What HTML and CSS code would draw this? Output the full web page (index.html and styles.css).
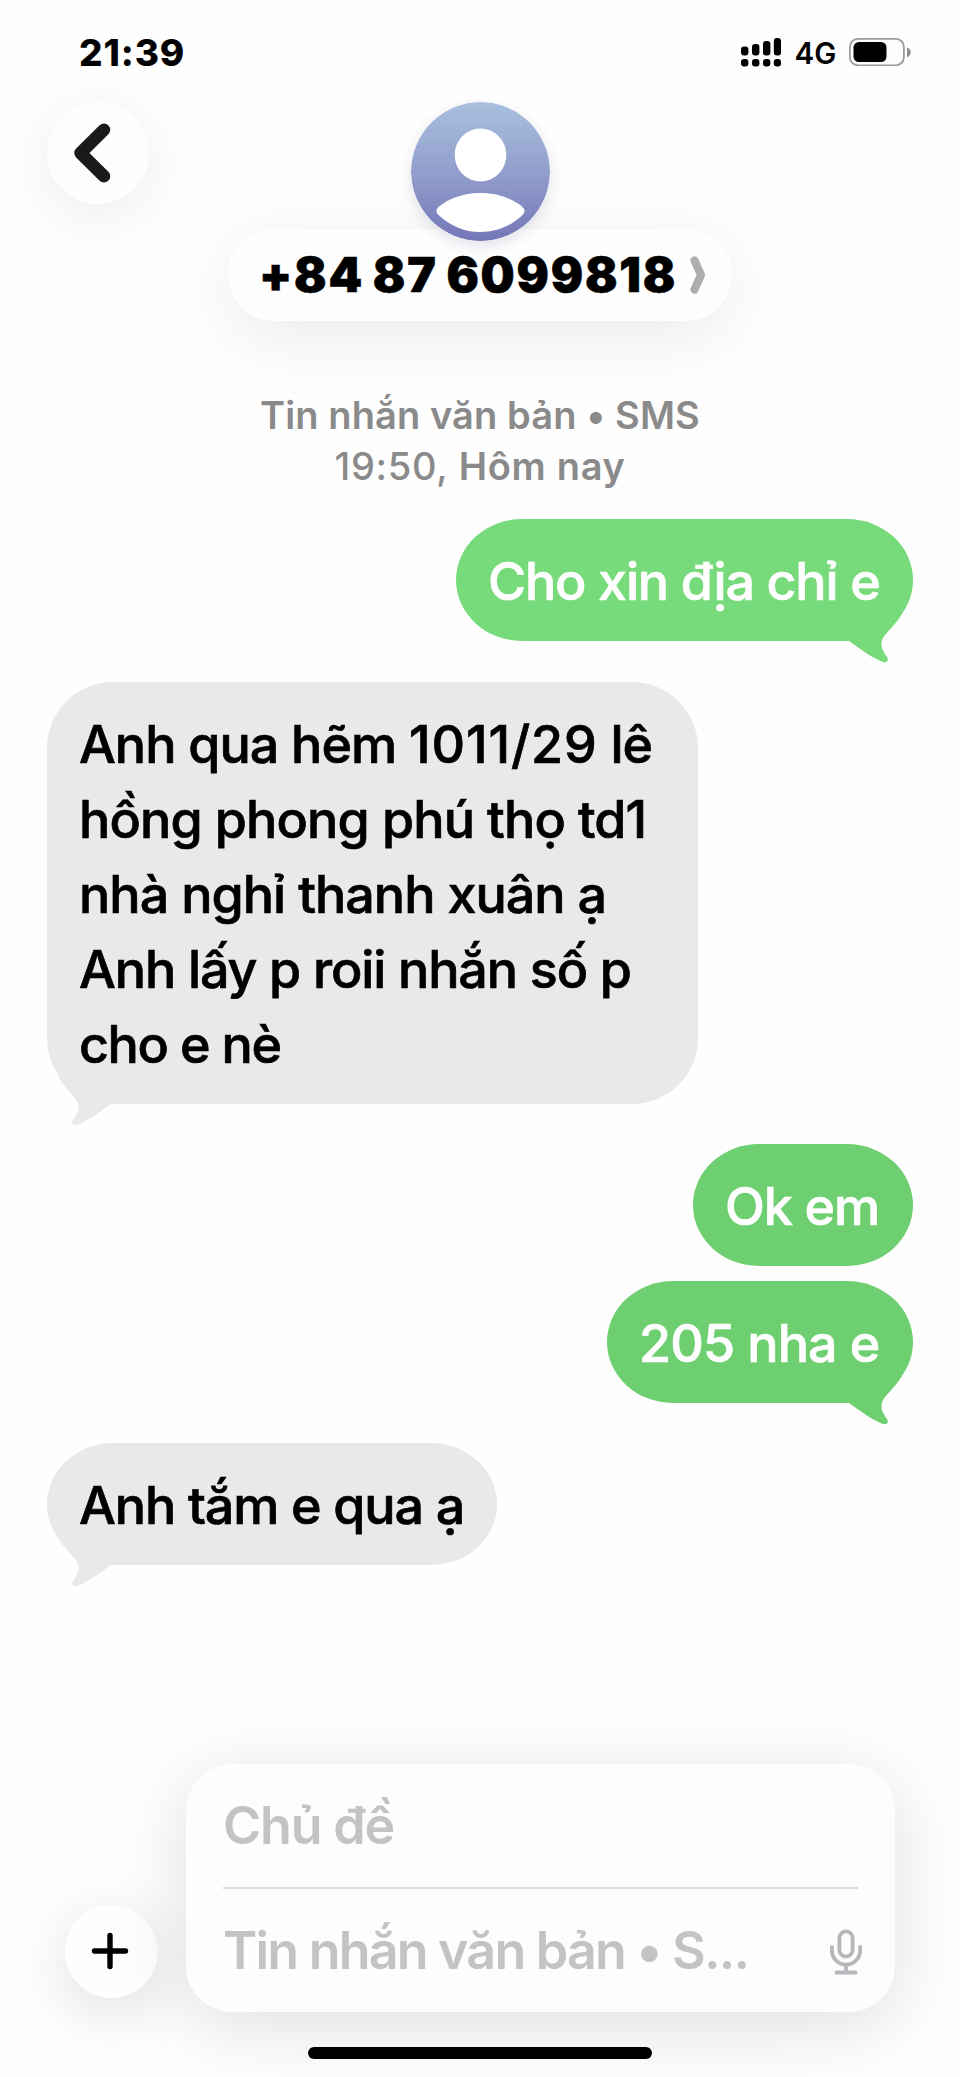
FILE: index.html
```html
<!DOCTYPE html>
<html lang="vi">
<head>
<meta charset="utf-8">
<title>+84 87 6099818</title>
<link rel="stylesheet" href="styles.css">
</head>
<body>
<div class="phone">
  <header class="status">
    <span class="clock">21:39</span>
    <div class="indicators">
      <svg class="signal" width="40" height="29" viewBox="0 0 40 29">
        <rect x="0" y="8.5" width="7.4" height="9" rx="3"/>
        <rect x="11" y="6" width="7.4" height="11.500" rx="3"/>
        <rect x="22" y="3" width="7.4" height="14.500" rx="3"/>
        <rect x="32.800" y="0" width="7.200" height="17.500" rx="3"/>
        <rect x="0" y="21" width="7.400" height="7.600" rx="3"/>
        <rect x="11" y="21" width="7.400" height="7.600" rx="3"/>
        <rect x="22" y="21" width="7.400" height="7.600" rx="3"/>
        <rect x="32.800" y="21" width="7.200" height="7.600" rx="3"/>
      </svg>
      <span class="network">4G</span>
      <svg class="battery" width="62" height="28" viewBox="0 0 62 28">
        <rect x="0.900" y="0.900" width="54" height="26.400" rx="8" fill="none" stroke="#9b9b9b" stroke-width="1.800"/>
        <rect x="4.500" y="4" width="33" height="20" rx="5.500"/>
        <path d="M58 9.500c5 1.200 5 8.500 0 9.700z" fill="#8f8f8f"/>
      </svg>
    </div>
  </header>

  <nav class="nav">
    <button class="round back" aria-label="Quay lại">
      <svg width="40" height="60" viewBox="0 0 40 60"><path d="M30 6.800 6.500 30 30 53.200" fill="none" stroke="#1a1a1a" stroke-width="12.500" stroke-linecap="round" stroke-linejoin="round"/></svg>
    </button>
    <div class="contact">
      <svg class="avatar" width="139" height="139" viewBox="0 0 139 139">
        <defs><linearGradient id="sky" x1="0" y1="0" x2="0" y2="1"><stop offset="0" stop-color="#a9c0de"/><stop offset=".55" stop-color="#8f9bca"/><stop offset="1" stop-color="#7577b8"/></linearGradient></defs>
        <circle cx="69.500" cy="69.500" r="69.500" fill="url(#sky)"/>
        <ellipse cx="69.500" cy="53" rx="25.800" ry="26.500" fill="#fff"/>
        <path d="M69.500 91C90 91 103 98.500 111 104.500Q115.500 108.500 112 112.500C100 124 86 130 69.500 130S39 124 27 112.500Q23.500 108.500 28 104.500C36 98.500 49 91 69.500 91z" fill="#fff"/>
      </svg>
      <div class="number">
        <span class="digits">+84 87 6099818</span>
        <svg width="16" height="40" viewBox="0 0 16 40"><path d="M4.500 5.500 11 20 4.500 34.500" fill="none" stroke="#adadad" stroke-width="8" stroke-linecap="round" stroke-linejoin="round"/></svg>
      </div>
    </div>
  </nav>

  <main class="thread">
    <div class="stamp">
      <p class="kind">Tin nhắn văn bản • SMS</p>
      <p class="when"><span class="hour">19:50,</span> Hôm nay</p>
    </div>
    <div class="bubble sent light"><span class="t1">Cho xin địa chỉ e</span>
      <svg class="tail" width="70" height="60" viewBox="0 0 70 60"><path d="M5 38H14C25 46 39 56 48 59C52 60 54 57.500 52 54C47 47 45 42 47.500 36C50 30 59 24 67 11L40 5z"/></svg>
    </div>
    <div class="bubble received tall"><span class="a1">Anh qua hẽm <span class="plot">1011/29</span> lê</span><br><span class="a2">hồng phong phú thọ td1</span><br><span class="a3">nhà nghỉ thanh xuân ạ</span><br><span class="a4">Anh lấy p roii nhắn số p</span><br><span class="a5">cho e nè</span>
      <svg class="tail" width="70" height="60" viewBox="0 0 70 60"><path d="M5 38H14C25 46 39 56 48 59C52 60 54 57.500 52 54C47 47 45 42 47.500 36C50 30 59 24 67 11L40 5z"/></svg>
    </div>
    <div class="bubble sent plain"><span class="t3">Ok em</span></div>
    <div class="bubble sent follow"><span class="t4">205 nha e</span>
      <svg class="tail" width="70" height="60" viewBox="0 0 70 60"><path d="M5 38H14C25 46 39 56 48 59C52 60 54 57.500 52 54C47 47 45 42 47.500 36C50 30 59 24 67 11L40 5z"/></svg>
    </div>
    <div class="bubble received"><span class="t5">Anh tắm e qua ạ</span>
      <svg class="tail" width="70" height="60" viewBox="0 0 70 60"><path d="M5 38H14C25 46 39 56 48 59C52 60 54 57.500 52 54C47 47 45 42 47.500 36C50 30 59 24 67 11L40 5z"/></svg>
    </div>
  </main>

  <footer class="composer">
    <button class="round add" aria-label="Thêm">
      <svg width="38" height="38" viewBox="0 0 38 38"><path d="M19 3.500v31M3.500 19h31" fill="none" stroke="#000" stroke-width="5.400" stroke-linecap="round"/></svg>
    </button>
    <div class="card">
      <div class="field subject"><span class="s1">Chủ đề</span></div>
      <div class="field message">
        <span class="s2">Tin nhắn văn bản • S...</span>
        <svg class="mic" width="34" height="46" viewBox="0 0 34 46" fill="none" stroke="#b5b7bb" stroke-width="3.800" stroke-linecap="round" stroke-linejoin="round"><rect x="10.400" y="2.400" width="13.200" height="25.200" rx="6.600"/><path d="M2.900 18v3.500a14.100 14.100 0 0 0 28.200 0V18M17 36v7M7.500 43.500h19"/></svg>
      </div>
    </div>
  </footer>
  <div class="home"></div>
</div>
</body>
</html>
```
FILE: styles.css
```css
* { box-sizing: border-box; margin: 0; padding: 0; }
body { background: #fefefe; font-family: Inter, "Noto Sans", sans-serif; color: #000; }
button { border: 0; font: inherit; }
svg { display: block; flex: none; }
.phone { width: 960px; height: 2077px; display: flex; flex-direction: column; overflow: hidden; }

.status { height: 102px; display: flex; justify-content: space-between; padding: 38px 49px 0 79px; white-space: nowrap; }
.clock { font-size: 37px; font-weight: 800; line-height: 30px; letter-spacing: .9px; }
.indicators { display: flex; height: 28px; }
.network { width: 42px; margin: 0 12.500px 0 14px; font-size: 29.5px; font-weight: 600; line-height: 31px; }

.nav { height: 219px; display: grid; grid-template-columns: 1fr 504px 1fr; }
.round { display: flex; align-items: center; justify-content: center; border-radius: 50%; background: #fefefe; }
.back { width: 102px; height: 102px; margin-left: 47px; padding-right: 8px; box-shadow: 0 12px 64px rgba(0, 0, 0, .075); }
.contact { display: flex; flex-direction: column; align-items: center; }
.avatar { position: relative; z-index: 1; border-radius: 50%; box-shadow: 0 5px 14px rgba(40, 40, 100, .13); }
.number { width: 504px; height: 92px; margin-top: -12px; padding: 0 26px 0 31px; display: flex; align-items: center; justify-content: space-between; border-radius: 46px; background: #fefefe; box-shadow: 0 16px 72px rgba(0, 0, 0, .08); white-space: nowrap; }
.digits { font-size: 48px; font-weight: 900; line-height: 92px; letter-spacing: 1.8px; word-spacing: -2.500px; -webkit-text-stroke: .6px #000; }

.thread { height: 1443px; padding: 69px 47px 0; display: flex; flex-direction: column; align-items: flex-end; }
.stamp { width: 100%; margin-bottom: 28px; color: #8a8a8b; font-size: 38px; font-weight: 600; line-height: 50.5px; text-align: center; white-space: nowrap; }
.kind { letter-spacing: .1px; }
.when { letter-spacing: .7px; }
.hour { font-weight: 500; }
.bubble { position: relative; height: 122px; padding: 25px 32px 0; border-radius: 66px / 61px; font-size: 52px; font-weight: 500; line-height: 75px; white-space: nowrap; -webkit-text-stroke: .7px currentColor; }
.sent { background: #6dcf70; color: #fff; fill: #6dcf70; }
.light { width: 457px; background: #77da7b; fill: #77da7b; }
.received { align-self: flex-start; width: 450px; margin-top: 40px; background: #e9e9e9; fill: #e9e9e9; }
.tall { width: 651px; height: 422px; margin: 41px 0 40px; border-radius: 66px; }
.plain { width: 220px; }
.follow { width: 306px; margin-top: 15px; }
.tail { position: absolute; right: 8px; bottom: -22px; }
.received .tail { right: auto; left: 8px; transform: scaleX(-1); }

/* Tracking per line */
.t1 { letter-spacing: -1.15px; }
.a1 { letter-spacing: -1px; }
.plot { letter-spacing: .9px; }
.a2 { letter-spacing: -.85px; }
.a3 { letter-spacing: -.95px; }
.a4 { letter-spacing: -1.1px; }
.a5 { letter-spacing: -1.4px; }
.t3 { letter-spacing: -1.1px; }
.t4 { letter-spacing: -.85px; }
.t5 { letter-spacing: -1.1px; }
.s1 { letter-spacing: -1.2px; }
.s2 { letter-spacing: -1.8px; }

.composer { height: 248px; padding: 0 65px; display: flex; align-items: flex-end; gap: 28px; }
.add { width: 93px; height: 93px; margin-bottom: 14px; padding: 0 3px 2px 0; box-shadow: 0 14px 60px rgba(0, 0, 0, .13); }
.card { width: 709px; height: 248px; padding: 0 37px; border-radius: 46px; background: #fdfdfd; box-shadow: 0 14px 76px rgba(0, 0, 0, .125); }
.field { color: #c3c3c4; font-size: 52px; font-weight: 600; line-height: 75px; white-space: nowrap; }
.subject { height: 125px; padding-top: 24px; border-bottom: 2px solid #dcdcdc; }
.message { display: flex; padding-top: 24px; margin-right: -5px; justify-content: space-between; }
.mic { margin-top: 16px; }
.home { width: 344px; height: 12px; margin: 35px 0 0 308px; border-radius: 6px; background: #000; }
```
